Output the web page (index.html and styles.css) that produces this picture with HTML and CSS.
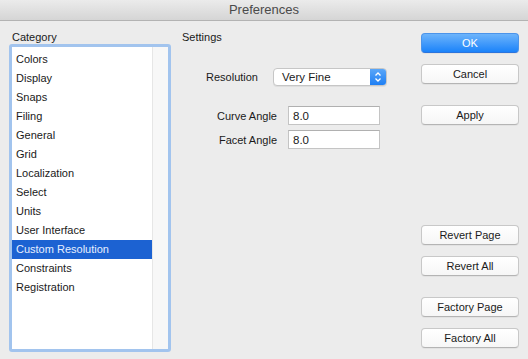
FILE: index.html
```html
<!DOCTYPE html>
<html lang="en">
<head>
    <meta charset="UTF-8">
    <title>Preferences</title>
    <link rel="stylesheet" href="styles.css">
</head>
<body>

    <div class="titlebar">Preferences</div>

    <div class="main">
        <div class="col-category">
            <div class="heading">Category</div>
            <div class="list">
                <ul class="items">
                    <li>Colors</li>
                    <li>Display</li>
                    <li>Snaps</li>
                    <li>Filing</li>
                    <li>General</li>
                    <li>Grid</li>
                    <li>Localization</li>
                    <li>Select</li>
                    <li>Units</li>
                    <li>User Interface</li>
                    <li class="selected">Custom Resolution</li>
                    <li>Constraints</li>
                    <li>Registration</li>
                </ul>
                <div class="scroll-track"></div>
            </div>
        </div>

        <div class="col-settings">
            <div class="heading">Settings</div>

            <div class="row row-resolution">
                <span class="label">Resolution</span>
                <div class="popup">
                    <span class="popup-value">Very Fine</span>
                    <span class="stepper">
                        <svg width="8" height="12" viewBox="0 0 8 12">
                            <path d="M1.5 4.5 L4 2 L6.5 4.5 M1.5 7.5 L4 10 L6.5 7.5" fill="none" stroke="#fff" stroke-width="1.3"/>
                        </svg>
                    </span>
                </div>
            </div>

            <div class="angles">
                <div class="row row-angle">
                    <span class="label">Curve Angle</span>
                    <input class="field" type="text" value="8.0">
                </div>
                <div class="row row-angle">
                    <span class="label">Facet Angle</span>
                    <input class="field" type="text" value="8.0">
                </div>
            </div>
        </div>

        <div class="col-buttons">
            <button class="btn btn-default">OK</button>
            <button class="btn gap-sm">Cancel</button>
            <button class="btn gap-md">Apply</button>
            <button class="btn gap-xl">Revert Page</button>
            <button class="btn gap-sm">Revert All</button>
            <button class="btn gap-md">Factory Page</button>
            <button class="btn gap-sm">Factory All</button>
        </div>
    </div>

</body>
</html>
```

FILE: styles.css
```css
body {
    margin: 0;
    width: 528px;
    height: 359px;
    background: #ececec;
    font-family: "Liberation Sans", Arial, sans-serif;
    font-size: 11px;
    color: #1a1a1a;
    overflow: hidden;
}
.titlebar {
    height: 20px;
    line-height: 20px;
    text-align: center;
    font-size: 13px;
    color: #4a4a4a;
    background: linear-gradient(#ebebeb, #d5d5d5);
    border-bottom: 1px solid #b3b3b3;
}
.main {
    display: flex;
    padding: 9px 9px 0 9px;
}
.heading {
    height: 14px;
    line-height: 14px;
    margin-left: 3px;
}

/* category list */
.col-category {
    width: 162px;
}
.list {
    display: flex;
    height: 302px;
    border: 3px solid #a2c4ee;
    border-radius: 3px;
    background: #fff;
}
.items {
    list-style: none;
    margin: 0;
    padding: 3px 0 0 0;
    width: 140px;
}
.items li {
    height: 19px;
    line-height: 18px;
    padding-left: 4px;
}
.items li.selected {
    background: #1c62d2;
    color: #e6efff;
}
.scroll-track {
    flex: 1;
    background: #f7f7f7;
    border-left: 1px solid #e6e6e6;
}

/* settings */
.col-settings {
    flex: 1;
    padding-left: 11px;
}
.col-settings .heading {
    margin-left: 0;
}
.row {
    display: flex;
    align-items: center;
}
.label {
    text-align: right;
}
.row-resolution {
    margin-top: 24px;
}
.row-resolution .label {
    width: 76px;
    margin-right: 15px;
}
.popup {
    display: flex;
    width: 112px;
    height: 16px;
    border: 1px solid #c6c6c6;
    border-radius: 4px;
    background: #fff;
    box-shadow: 0 1px 0 rgba(0, 0, 0, 0.06);
    overflow: hidden;
}
.popup-value {
    flex: 1;
    line-height: 16px;
    padding-left: 8px;
    font-size: 11.5px;
}
.stepper {
    width: 16px;
    display: flex;
    align-items: center;
    justify-content: center;
    background: linear-gradient(#5aa6f8, #1e7ff4);
}
.angles {
    margin-top: 20px;
}
.row-angle + .row-angle {
    margin-top: 5px;
}
.row-angle .label {
    width: 95px;
    margin-right: 11px;
}
.field {
    box-sizing: border-box;
    width: 92px;
    height: 19px;
    margin: 0;
    padding: 0 0 0 4px;
    border: 1px solid #c4c4c4;
    border-top-color: #b0b0b0;
    background: #fff;
    font-family: inherit;
    font-size: 11.5px;
    color: #1a1a1a;
    outline: none;
}

/* buttons */
.col-buttons {
    width: 98px;
    display: flex;
    flex-direction: column;
    padding-top: 3px;
}
.btn {
    box-sizing: border-box;
    height: 20px;
    margin: 0;
    padding: 0;
    border: 1px solid #c8c8c8;
    border-bottom-color: #b4b4b4;
    border-radius: 4px;
    background: linear-gradient(#ffffff, #f6f6f6);
    box-shadow: 0 1px 0 rgba(0, 0, 0, 0.04);
    font-family: inherit;
    font-size: 11px;
    color: #1a1a1a;
}
.btn-default {
    border-color: #4b94ea;
    border-bottom-color: #2c74dc;
    background: linear-gradient(#6db4fb, #1b83fa);
    color: #fff;
}
.gap-sm {
    margin-top: 11px;
}
.gap-md {
    margin-top: 21px;
}
.gap-xl {
    margin-top: 100px;
}
```
